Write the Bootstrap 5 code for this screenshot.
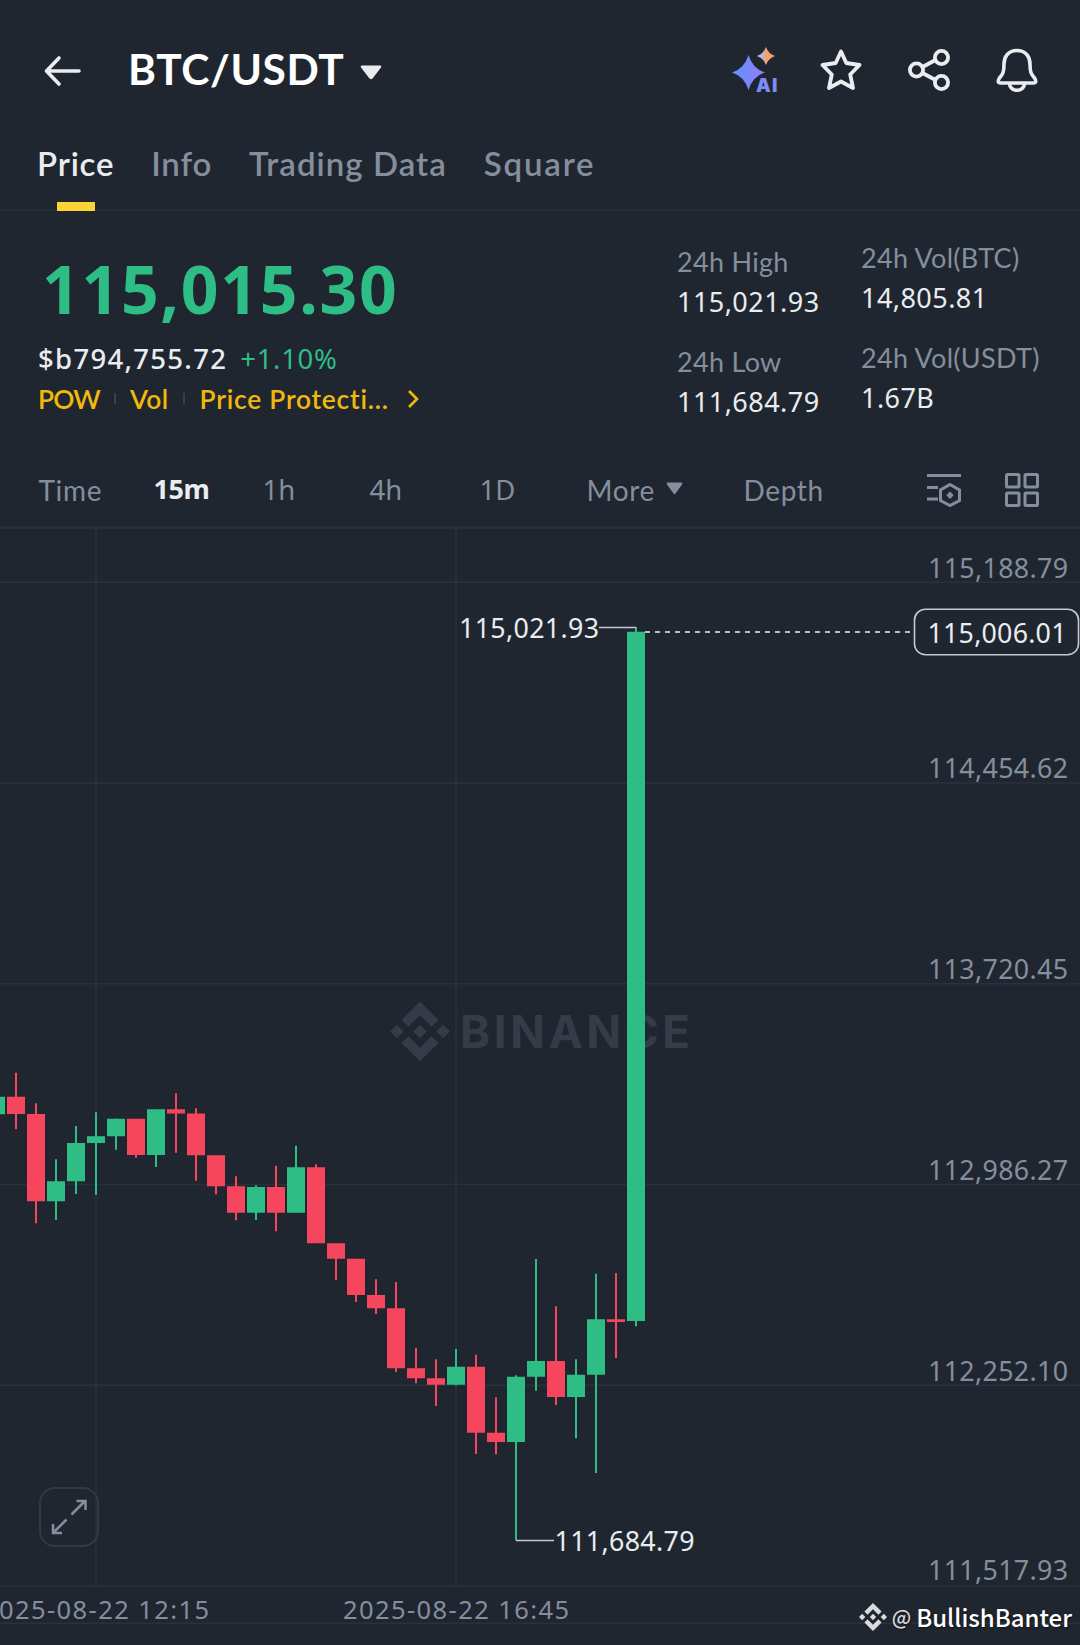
<!DOCTYPE html>
<html lang="en">
<head>
<meta charset="utf-8">
<meta name="viewport" content="width=device-width, initial-scale=1">
<title>BTC/USDT</title>
<link href="https://cdn.jsdelivr.net/npm/bootstrap@5.3.0/dist/css/bootstrap.min.css" rel="stylesheet">
<style>
:root{--ink:#eaecef;--dim:#848e9c;--line:#2b313c;--up:#2ebd85;--down:#f6465d;--gold:#f0b90b}
body{background:#202630;color:var(--ink);font-family:Lato,"Noto Sans",sans-serif;width:1080px;overflow-x:hidden}
svg{display:block}
.num{font-family:"Noto Sans",sans-serif}
.dim{color:var(--dim)}
.topbar{height:140px;padding:0 42px 0 44px}
.pair{font-size:42.5px;line-height:60px;font-weight:700;letter-spacing:.6px;color:#fff;margin:-3px 0 0 46px}
.pair-caret{margin-left:16px}
.ai{margin-right:41px;overflow:visible}
.tool-gap{gap:46px}
.tabs{height:71px;padding-left:37px;gap:37px;box-shadow:inset 0 -1px var(--line);font-size:33px;line-height:46px;font-weight:700;letter-spacing:.5px;color:var(--dim)}
.tab-on{color:var(--ink)}
.tab-on::after{content:"";width:38px;height:9px;margin-top:16px;background:#fcd535}
.tabs{font-weight:600;letter-spacing:.8px}
.ls-trading{letter-spacing:1.05px}
.ls-square{letter-spacing:1.8px}
.summary{height:244px;padding-left:38px}
.last{font-size:66px;line-height:80px;font-weight:700;letter-spacing:1.7px;color:var(--up);margin:37px 0 0 4px}
.fiat{font-size:27.5px;line-height:40px;margin-top:10.5px}
.fiat-usd{letter-spacing:1.3px;font-weight:500}
.fiat-pct{letter-spacing:.7px;margin-left:13px;color:var(--up)}
.tags{font-size:26.3px;line-height:40px;font-weight:600;color:var(--gold)}
.tag-pow{letter-spacing:-.8px}
.tag-vol{letter-spacing:.4px}
.tag-price{letter-spacing:.8px;margin-left:1px}
.sep{width:2px;height:11px;background:#39404c;margin:0 14px}
.stat{font-size:27px;line-height:40px}
.stat .num{letter-spacing:.45px}
.stat .dim{letter-spacing:.3px}
.stat-l{width:184px;margin-top:31px}
.stat-r{width:219px;margin-top:26.5px}
.stat-next{margin-top:20px}
.frames{height:74px;padding:0 0 1px 38.5px;border-bottom:3px solid #282e39;display:grid;grid-template-columns:115px 109px 107px 110px 107px 157px 182px 79px 1fr;align-items:center;font-size:28px;letter-spacing:.65px;color:var(--dim)}
.frames .num{letter-spacing:0;font-size:27.5px}
.frames .frame-on{color:var(--ink);font-size:27px;font-weight:700;letter-spacing:-.4px;margin-top:-2px}
.more-caret{margin:-4px 0 0 11px}
.chart{height:1116px}
.chart text{font-family:"Noto Sans",sans-serif;font-size:26.8px}
.chart .axis-date{font-size:25.5px}
.chart .wordmark{font-family:Inter,sans-serif;font-weight:700;font-size:45.5px}
.expand{left:39px;top:958px;width:60px;height:60px;border:2px solid #333944;border-radius:16px;background:none}
.credit{right:8px;bottom:11px;gap:5px;font:500 24px/34px "Noto Sans CJK SC",sans-serif;color:#fff;text-shadow:1px 1px 2px #0008}
.credit-at{font-size:20px;color:#d9dadc}
</style>
</head>
<body>
<header class="topbar d-flex align-items-center">
  <svg width="38" height="32" viewBox="0 0 38 32" fill="none" stroke="#eaecef" stroke-width="3.6" stroke-linecap="round" stroke-linejoin="round" style="margin-top:2px"><path d="M35 16H3M15 3 2.500 16 15 29"/></svg>
  <div class="pair">BTC/USDT</div>
  <svg width="22" height="15" viewBox="0 0 22 15" class="pair-caret mt-1"><path d="M2 .5h18q2 .5 .8 2.300L12.500 13.500q-1.500 1.500-3 0L1.200 2.800Q0 1 2 .5z" fill="#eaecef"/></svg>
  <div class="d-flex align-items-center ms-auto">
    <svg class="ai" width="47" height="46" viewBox="0 0 47 46"><defs><linearGradient id="g1"><stop stop-color="#5c93ff"/><stop offset="1" stop-color="#9a7bf5"/></linearGradient><linearGradient id="g2"><stop offset=".3" stop-color="#b9b4e0"/><stop offset=".5" stop-color="#f5a06c"/></linearGradient></defs><path d="M16.500 8q4 13.500 16.500 17.500Q20.500 29.500 16.500 43 12.500 29.500 0 25.500 12.500 21.500 16.500 8z" fill="url(#g1)"/><path d="M34 0q2.300 6.700 9 9-6.700 2.300-9 9-2.300-6.700-9-9 6.700-2.300 9-9z" fill="url(#g2)"/><text x="24" y="45" font-family="Inter, sans-serif" font-weight="900" font-size="18.500" textLength="21.500" fill="#7d8bf7" stroke="#202630" stroke-width="3" paint-order="stroke">AI</text></svg>
    <div class="tool-gap d-flex align-items-center">
    <svg width="42" height="42" viewBox="0 0 42 42" fill="none" stroke="#eaecef" stroke-width="3.800" stroke-linejoin="round"><path d="M21 2.500 26.300 14 39.500 16 30.200 25.500 33 39 21 32.500 9 39 11.800 25.500 2.500 16 15.700 14z"/></svg>
    <svg width="42" height="42" viewBox="0 0 42 42" fill="none" stroke="#eaecef" stroke-width="3.800"><circle cx="8.500" cy="21" r="6.600"/><circle cx="33.500" cy="8.500" r="6.600"/><circle cx="33.500" cy="33.500" r="6.600"/><path d="m14.500 18 13-7M14.500 24l13 7"/></svg>
    <svg width="42" height="44" viewBox="0 0 42 44" fill="none" stroke="#eaecef" stroke-width="3.600" stroke-linejoin="round"><path d="M21 2.500C12 2.500 8 9 8 16c0 8-1 10-4.500 14-2 3-1.500 5 1 5h33c2.500 0 3-2 1-5C35 26 34 24 34 16c0-7-4-13.500-13-13.500zM13.500 35.500a7.500 6.800 0 0 0 15 0"/></svg>
    </div>
  </div>
</header>

<nav class="tabs d-flex">
  <div class="tab-on d-flex flex-column align-items-center"><span>Price</span></div>
  <div>Info</div>
  <div class="ls-trading">Trading Data</div>
  <div class="ls-square">Square</div>
</nav>

<section class="summary d-flex">
  <div class="flex-fill">
    <div class="last num">115,015.30</div>
    <div class="fiat num"><span class="fiat-usd">$b794,755.72</span><span class="fiat-pct">+1.10%</span></div>
    <div class="tags d-flex align-items-center"><span class="tag-pow">POW</span><i class="sep"></i><span class="tag-vol">Vol</span><i class="sep"></i><span class="tag-price">Price Protecti...</span>
      <svg width="12" height="20" viewBox="0 0 12 20" fill="none" stroke="#f0b90b" stroke-width="2.600" style="margin-left:18px"><path d="m2 2 8 8-8 8"/></svg></div>
  </div>
  <div class="stat stat-l">
    <div class="dim">24h High</div>
    <div class="num">115,021.93</div>
    <div class="dim stat-next">24h Low</div>
    <div class="num">111,684.79</div>
  </div>
  <div class="stat stat-r">
    <div class="dim">24h Vol(BTC)</div>
    <div class="num">14,805.81</div>
    <div class="dim stat-next">24h Vol(USDT)</div>
    <div class="num">1.67B</div>
  </div>
</section>

<nav class="frames">
  <div>Time</div><div class="num frame-on">15m</div><div class="num">1h</div><div class="num">4h</div><div class="num">1D</div>
  <div class="d-flex align-items-center"><span>More</span><svg width="17" height="13" viewBox="0 0 17 13" class="more-caret"><path d="M1.500.5h14q1.500.5.5 2L9.500 11.500q-1 1-2 0L1 2.500Q0 1 1.500.5z" fill="#848e9c"/></svg></div>
  <div>Depth</div>
  <svg width="36" height="34" viewBox="0 0 36 34" fill="none" stroke="#848e9c" stroke-width="3"><path d="M1 2.500h34M1 14.500h11M1 26h11M24 11.500l9.500 5.400v10.700L24 32.500l-9.500-4.900V16.900z"/><path d="m24 18.500 3.700 3.700-3.700 3.700-3.700-3.700z" fill="#848e9c" stroke="none"/></svg>
  <svg width="34" height="34" viewBox="0 0 34 34" fill="none" stroke="#848e9c" stroke-width="3"><rect x="1.500" y="1.500" width="12.500" height="12.500" rx="1"/><rect x="20" y="1.500" width="12.500" height="12.500" rx="1"/><rect x="1.500" y="20" width="12.500" height="12.500" rx="1"/><rect x="20" y="20" width="12.500" height="12.500" rx="1"/></svg>
</nav>

<main class="chart position-relative">
  <svg width="1080" height="1116" viewBox="0 529 1080 1116">
    <path d="M96 529V1586M456 529V1586M0 582.200H1080M0 783H1080M0 983.700H1080M0 1184.500H1080M0 1385.300H1080M0 1586.300H1080M0 1623.300H1080" stroke="#2b313c" stroke-width="1.500"/>
    <g fill="#363c47"><svg x="390" y="1001.500" width="60" height="60" viewBox="0 0 24 24"><path id="bnb" d="M16.624 13.9202l2.7175 2.7154-7.353 7.353-7.353-7.352 2.7175-2.7164 4.6355 4.6595 4.6356-4.6595zm4.6366-4.6366L24 12l-2.7154 2.7164L18.5682 12l2.6924-2.7164zm-9.272.001l2.7163 2.6914-2.7164 2.7174v-.001L9.2721 12l2.7164-2.7154zm-9.2722-.001L5.4088 12l-2.6914 2.6924L0 12l2.7164-2.7164zM11.9885.0115l7.353 7.329-2.7174 2.7154-4.6356-4.6356-4.6355 4.6595-2.7174-2.7154 7.353-7.353z"/></svg>
    <text class="wordmark" x="460" y="1048" textLength="230">BINANCE</text></g>
    <g id="candles"></g>
    <path d="M599 627.500h37M516 1540.500h38" stroke="#c5c8ce" stroke-width="1.500"/>
    <path d="M645 632H912" stroke="#b7bdc6" stroke-width="1.800" stroke-dasharray="5 5"/>
    <g fill="#eaecef">
      <text x="459" y="637.700" textLength="140">115,021.93</text>
      <text x="554.500" y="1550.700" textLength="140">111,684.79</text>
    </g>
    <rect x="914.500" y="609.200" width="164" height="45.500" rx="11" fill="#202630" stroke="#c5c8ce" stroke-width="1.600"/>
    <text x="927.500" y="642.500" textLength="139" fill="#eaecef">115,006.01</text>
    <g fill="#848e9c">
      <text x="928" y="577.800" textLength="140">115,188.79</text>
      <text x="928" y="778" textLength="140">114,454.62</text>
      <text x="928" y="979" textLength="140">113,720.45</text>
      <text x="928" y="1180" textLength="140">112,986.27</text>
      <text x="928" y="1381" textLength="140">112,252.10</text>
      <text x="928" y="1579.500" textLength="140">111,517.93</text>
      <text class="axis-date" x="-17" y="1618.500" textLength="226">2025-08-22 12:15</text>
      <text class="axis-date" x="343" y="1618.500" textLength="226">2025-08-22 16:45</text>
    </g>
  </svg>
  <button class="expand position-absolute p-0" aria-label="Full screen"><svg width="56" height="56" viewBox="0 0 56 56" fill="none" stroke="#848e9c" stroke-width="2.500"><path d="m30.500 25.500 13-13M35.500 12h9v9M25.500 30.500l-13 13M12 35v9h9"/></svg></button>
  <div class="credit position-absolute d-flex align-items-center"><svg width="28" height="28" viewBox="0 0 24 24" fill="#d9dadc"><use href="#bnb"/></svg><span class="credit-at">@</span><span>BullishBanter</span></div>
</main>

<script src="https://cdn.jsdelivr.net/npm/bootstrap@5.3.0/dist/js/bootstrap.bundle.min.js"></script>
<script>
// One candle every 20px: [direction, wick top, body top, body bottom, wick bottom]
const candles = [
["u",1096.7,1096.7,1114.300,1114.300],["d",1072.700,1096.700,1114,1129],["d",1103.300,1114,1201.300,1223.300],["u",1159.300,1181.300,1201.300,1220],
["u",1126,1143,1181.300,1194],["u",1112.300,1136.300,1143,1194.700],["u",1118.500,1118.700,1136.300,1149.700],["d",1118.700,1118.700,1155,1157.700],
["u",1109.300,1109.300,1155,1167],["d",1093.300,1109.300,1113.500,1152.700],["d",1108.300,1113.500,1155.300,1180.700],["d",1155.300,1155.300,1186.300,1194.300],
["d",1176.300,1186.300,1212.700,1220.300],["u",1185.300,1187,1212.700,1220],["d",1165.700,1187,1212.700,1231.300],["u",1145.700,1167.300,1212.700,1212.700],
["d",1164.300,1167.300,1243.300,1243.300],["d",1243.300,1243.300,1258.700,1280.300],["d",1258.700,1258.700,1295,1302],["d",1279.300,1295,1308.300,1314],
["d",1282,1308.300,1368.300,1372],["d",1347.700,1368.300,1378.300,1383.300],["d",1359.300,1378.300,1384.700,1406],["u",1349,1366.700,1384.700,1385.300],
["d",1354.700,1366.700,1432.700,1454],["d",1397.300,1432.700,1442,1454.300],["u",1375.300,1376.700,1442,1540.300],["u",1259,1361,1376.700,1390.700],
["d",1306.300,1361,1397,1405],["u",1359.300,1374.700,1397,1438.300],["u",1273.700,1319.300,1374.700,1473],["d",1273,1319.300,1322,1358],["u",627,631.700,1321,1326.300]];
document.getElementById("candles").innerHTML = candles.map(([d,h,t,b,l],i)=>{
  const x=-4+20*i;
  return `<path fill="${d==="u"?"#2ebd85":"#f6465d"}" d="M${x-9} ${t}h18V${b}h-18zM${x-1} ${h}h2V${l}h-2z"/>`;
}).join("");
</script>
</body>
</html>
